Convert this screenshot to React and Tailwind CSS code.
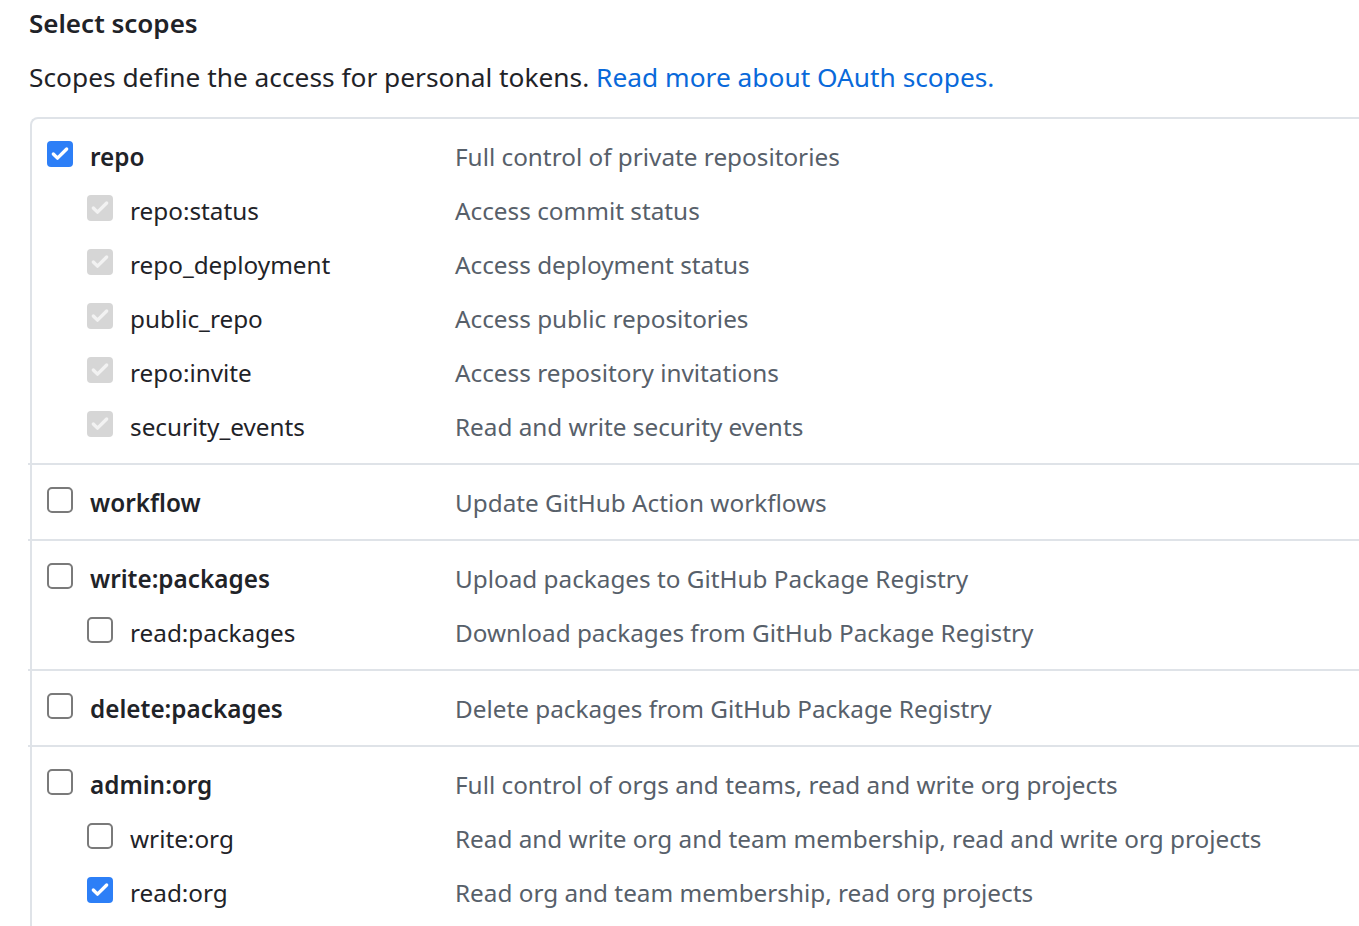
import { Check } from "lucide-react";

const GROUPS = [
  {
    name: "repo",
    checked: true,
    desc: "Full control of private repositories",
    children: [
      { name: "repo:status", desc: "Access commit status", state: "disabled" },
      { name: "repo_deployment", desc: "Access deployment status", state: "disabled" },
      { name: "public_repo", desc: "Access public repositories", state: "disabled" },
      { name: "repo:invite", desc: "Access repository invitations", state: "disabled" },
      { name: "security_events", desc: "Read and write security events", state: "disabled" },
    ],
  },
  { name: "workflow", desc: "Update GitHub Action workflows", children: [] },
  {
    name: "write:packages",
    desc: "Upload packages to GitHub Package Registry",
    children: [{ name: "read:packages", desc: "Download packages from GitHub Package Registry" }],
  },
  { name: "delete:packages", desc: "Delete packages from GitHub Package Registry", children: [] },
  {
    name: "admin:org",
    desc: "Full control of orgs and teams, read and write org projects",
    children: [
      { name: "write:org", desc: "Read and write org and team membership, read and write org projects" },
      { name: "read:org", desc: "Read org and team membership, read org projects", state: "checked" },
    ],
  },
];

function Box({ state }) {
  if (state === "checked")
    return (
      <span className="w-[26px] h-[26px] shrink-0 rounded-[4px] bg-[#2d7ff7] flex items-center justify-center mb-[7px]">
        <Check size={20} strokeWidth={4} className="text-white" />
      </span>
    );
  if (state === "disabled")
    return (
      <span className="w-[26px] h-[26px] shrink-0 rounded-[4px] bg-[#d6d6d6] flex items-center justify-center mb-[7px]">
        <Check size={20} strokeWidth={4} className="text-[#f2f2f2]" />
      </span>
    );
  return <span className="w-[26px] h-[26px] shrink-0 rounded-[5px] border-2 border-[#7a7a7a] bg-white mb-[7px]" />;
}

function Row({ name, desc, state, sub, bold }) {
  return (
    <div className="h-[54px] flex items-center">
      <div className={`w-[408px] shrink-0 flex items-center gap-[17px] ${sub ? "pl-[40px]" : ""}`}>
        <Box state={state} />
        <span className={bold ? "font-semibold text-[#1f2328]" : "text-[#1f2328]"}>{name}</span>
      </div>
      <span className="text-[#57606a] whitespace-nowrap">{desc}</span>
    </div>
  );
}

export default function App() {
  return (
    <div className="min-h-screen bg-white pl-[29px] overflow-hidden" style={{ fontFamily: '"Noto Sans", "Open Sans", sans-serif' }}>
      <h3 className="text-[26px] font-semibold text-[#1f2328] leading-[46px]">Select scopes</h3>
      <p className="text-[26.3px] text-[#1f2328] mt-[9px] leading-[44px]">
        Scopes define the access for personal tokens.{" "}
        <a href="#" className="text-[#0969da]">Read more about OAuth scopes.</a>
      </p>
      <div className="mt-[18px] ml-px border-t-2 border-l-2 border-[#dfe3e8] rounded-tl-[8px] text-[24.3px] w-[1400px]">
        {GROUPS.map((g, i) => (
          <div key={g.name} className={i > 0 ? "border-t-2 border-[#dfe3e8] -ml-[4px] pl-[4px]" : ""}>
            <div className="pl-[15px] pt-[11px] pb-[9px]">
              <Row name={g.name} desc={g.desc} state={g.checked ? "checked" : undefined} bold />
              {g.children.map((c) => (
                <Row key={c.name} name={c.name} desc={c.desc} state={c.state} sub />
              ))}
            </div>
          </div>
        ))}
      </div>
    </div>
  );
}
